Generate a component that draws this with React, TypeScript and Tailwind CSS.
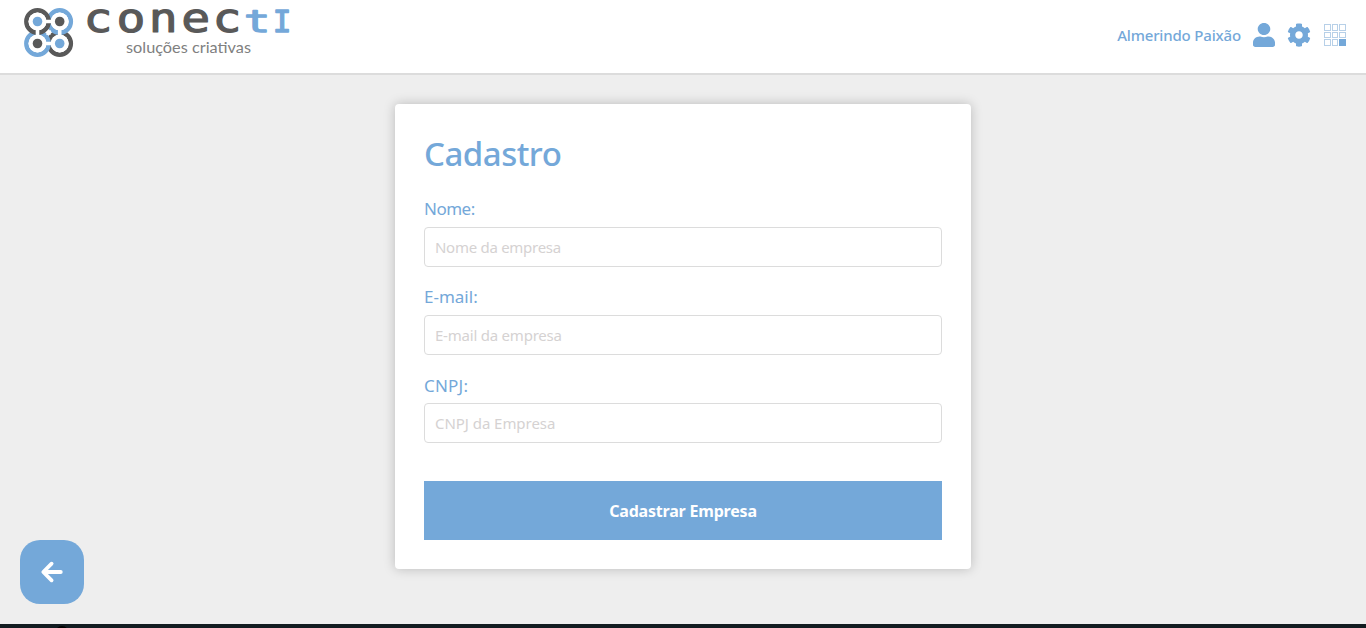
import { FaCog, FaUser } from "react-icons/fa";

function Rings() {
  return (
    <svg width="50" height="50" viewBox="0 0 50 50" fill="none" className="shrink-0" aria-hidden="true">
      <circle cx="35.7" cy="35.5" r="11.2" stroke="#595959" strokeWidth="4.4" />
      <circle cx="35.7" cy="13.5" r="11.2" stroke="#74a8d9" strokeWidth="4.4" />
      <circle cx="13.5" cy="35.5" r="11.2" stroke="#74a8d9" strokeWidth="4.4" />
      <circle cx="13.5" cy="13.5" r="11.2" stroke="#595959" strokeWidth="4.4" />
      <g fill="#fff">
        <circle cx="13.5" cy="13.5" r="9" />
        <circle cx="35.7" cy="13.5" r="9" />
        <circle cx="13.5" cy="35.5" r="9" />
        <circle cx="35.7" cy="35.5" r="9" />
      </g>
      <path d="M13.5 13.5H35.7V35.5H13.5Z" stroke="#fff" strokeWidth="3.6" />
      <path d="M23 23L26.5 26.5M26.8 22.6L22.6 26.8" stroke="#fff" strokeWidth="1.6" />
      <circle cx="13.5" cy="13.5" r="4.8" fill="#74a8d9" />
      <circle cx="35.7" cy="13.5" r="4.8" fill="#595959" />
      <circle cx="13.5" cy="35.5" r="4.8" fill="#595959" />
      <circle cx="35.7" cy="35.5" r="4.8" fill="#74a8d9" />
    </svg>
  );
}

const letters = [
  { x: -3.5, ch: "c" },
  { x: 29.6, ch: "o" },
  { x: 61.8, ch: "n" },
  { x: 94.2, ch: "e" },
  { x: 125.5, ch: "c" },
];

function Logo() {
  return (
    <div className="flex items-start gap-[13px]">
      <Rings />
      <svg width="206" height="54" viewBox="0 0 206 54" className="overflow-visible">
        <g fontFamily="'DejaVu Sans Mono', monospace" strokeLinejoin="round">
          <g fontSize="40" fill="#595959" stroke="#595959" strokeWidth="1.1">
            {letters.map((l) => (
              <text key={l.x} transform={`translate(${l.x} 23.8) scale(1.2 1)`}>{l.ch}</text>
            ))}
          </g>
          <g fontSize="31" fill="#74a8d9" stroke="#74a8d9" strokeWidth="1.3">
            <text transform="translate(157 24) scale(1.4 1)">t</text>
            <text x="185.8" y="24">I</text>
          </g>
        </g>
        <text x="39" y="45" fontFamily="Lato, sans-serif" fontSize="16" fill="#808080" textLength="125" lengthAdjust="spacingAndGlyphs">
          soluções criativas
        </text>
      </svg>
    </div>
  );
}

function AppsGrid() {
  return (
    <svg width="22" height="22" viewBox="0 0 22 22" fill="none" stroke="#b7d0e8" aria-hidden="true">
      {[0.5, 8.5, 15.5].map((y) =>
        [0.5, 8.5, 15.5].map((x) => (
          <rect key={`${x}-${y}`} x={x} y={y} width={x === 8.5 ? 5 : 6} height={y === 8.5 ? 5 : 6} />
        ))
      )}
      <rect x="15.5" y="15.5" width="6" height="6" fill="#74a8d9" stroke="#74a8d9" />
    </svg>
  );
}

const fields = [
  { id: "nome", label: "Nome:", placeholder: "Nome da empresa", labelClass: "tracking-[-0.5px] leading-[38px]", tracking: "tracking-[-0.28px]" },
  { id: "email", label: "E-mail:", placeholder: "E-mail da empresa", labelClass: "leading-[38px]", tracking: "tracking-[-0.22px]" },
  { id: "cnpj", label: "CNPJ:", placeholder: "CNPJ da Empresa", labelClass: "tracking-[0.2px] leading-[39px]", tracking: "tracking-[-0.05px]" },
];

export default function App() {
  return (
    <div className="relative flex h-[628px] w-full flex-col overflow-hidden bg-[#eeeeee] font-['Noto_Sans',sans-serif]">
      <header className="flex h-[75px] shrink-0 items-start justify-between border-b-2 border-[#dcdcdc] bg-white pl-6 pr-5 pt-[7.5px]">
        <Logo />
        <div className="flex h-[55px] items-center text-[#74a8d9]">
          <span className="mr-[11px] whitespace-nowrap text-[15px] font-medium tracking-[-0.17px]">Almerindo Paixão</span>
          <FaUser className="mr-[11px] h-6 w-6 scale-x-105" />
          <FaCog className="mr-[13px] size-6" />
          <AppsGrid />
        </div>
      </header>

      <main className="flex flex-1 justify-center pt-[29px]">
        <form className="flex h-[465px] w-[576px] flex-col rounded bg-white px-[29px] pt-[29px] shadow-[0_0_12px_rgba(0,0,0,0.22)]">
          <h1 className="mb-[15px] h-[42px] self-start whitespace-nowrap text-[33px] font-medium leading-[42px] tracking-[-0.5px] text-[#74a8d9]">Cadastro</h1>
          {fields.map((f) => (
            <div key={f.id} className="flex h-[88px] shrink-0 flex-col">
              <label htmlFor={f.id} className={`h-[37px] self-start text-[17px] text-[#74a8d9] ${f.labelClass}`}>
                {f.label}
              </label>
              <input
                id={f.id}
                placeholder={f.placeholder}
                className={`h-10 w-full rounded border border-[#dcdcdc] px-[10px] text-[15px] placeholder:text-[#d5d2d2] ${f.tracking}`}
              />
            </div>
          ))}
          <button type="button" className="mt-[27px] h-[59px] w-full shrink-0 bg-[#74a8d9] text-base font-bold tracking-[-0.2px] text-white">
            Cadastrar Empresa
          </button>
        </form>
      </main>

      <button type="button" aria-label="Voltar" className="absolute left-5 top-[540px] flex size-16 items-center justify-center rounded-[20px] bg-[#74a8d9]">
        <svg width="24" height="24" viewBox="0 0 24 24" fill="none" stroke="#fff" strokeWidth="3.8" strokeLinecap="round" strokeLinejoin="round">
          <path d="M11.6 3.7L3.3 12L11.6 20.3M3.8 12H20.8" />
        </svg>
      </button>

      <footer className="flex h-1 shrink-0 items-start overflow-hidden bg-[#121b20] pl-[55px]">
        <div className="mt-[2px] size-[14px] shrink-0 rounded-full bg-black" />
      </footer>
    </div>
  );
}
